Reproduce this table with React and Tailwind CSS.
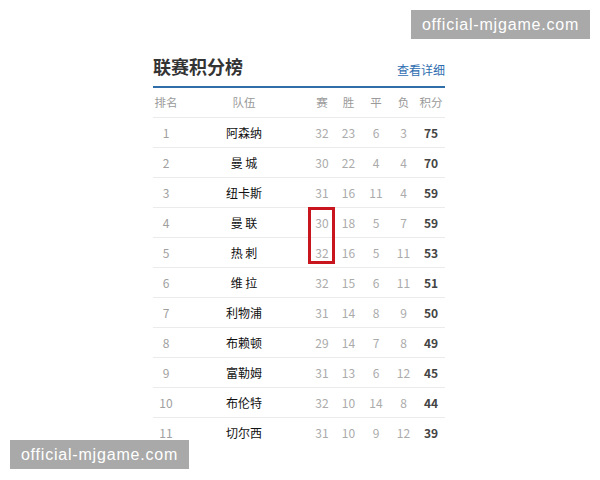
const rows = [
  { rank: 1, team: '阿森纳', p: 32, w: 23, d: 6, l: 3, pts: 75 },
  { rank: 2, team: '曼 城', p: 30, w: 22, d: 4, l: 4, pts: 70 },
  { rank: 3, team: '纽卡斯', p: 31, w: 16, d: 11, l: 4, pts: 59 },
  { rank: 4, team: '曼 联', p: 30, w: 18, d: 5, l: 7, pts: 59 },
  { rank: 5, team: '热 刺', p: 32, w: 16, d: 5, l: 11, pts: 53 },
  { rank: 6, team: '维 拉', p: 32, w: 15, d: 6, l: 11, pts: 51 },
  { rank: 7, team: '利物浦', p: 31, w: 14, d: 8, l: 9, pts: 50 },
  { rank: 8, team: '布赖顿', p: 29, w: 14, d: 7, l: 8, pts: 49 },
  { rank: 9, team: '富勒姆', p: 31, w: 13, d: 6, l: 12, pts: 45 },
  { rank: 10, team: '布伦特', p: 32, w: 10, d: 14, l: 8, pts: 44 },
  { rank: 11, team: '切尔西', p: 31, w: 10, d: 9, l: 12, pts: 39 },
];

const cols = 'grid grid-cols-[26px_130px_26px_27px_28px_27px_28px] items-center text-center';

export default function App() {
  return (
    <div className="relative w-[600px] h-[480px] overflow-hidden bg-white font-['Noto_Sans_CJK_SC','Noto_Sans',sans-serif]">
      <div className="h-[442px] overflow-hidden pt-[54px]">
        <div className="relative ml-[153px] w-[292px]">
          {/* title */}
          <div className="flex h-[34px] items-center justify-between border-b-2 border-[#2f6ea8]">
            <h2 className="-mt-[8px] text-[18px] font-bold leading-none text-[#333]">联赛积分榜</h2>
            <a className="-mt-[1px] text-[12px] leading-none text-[#2e6db0]">查看详细</a>
          </div>

          {/* header */}
          <div className={`${cols} h-[30px] border-b border-[#ebebeb] text-[11.5px] text-[#9a9a9a]`}>
            <span>排名</span>
            <span>队伍</span>
            <span>赛</span>
            <span>胜</span>
            <span>平</span>
            <span>负</span>
            <span>积分</span>
          </div>

          {rows.map((r) => (
            <div key={r.rank} className={`${cols} h-[30px] border-b border-[#ebebeb] text-[12px]`}>
              <span className="text-[#a0a0a0]">{r.rank}</span>
              <span className="whitespace-pre text-[#111]">{r.team}</span>
              <span className="text-[#ababab]">{r.p}</span>
              <span className="text-[#ababab]">{r.w}</span>
              <span className="text-[#ababab]">{r.d}</span>
              <span className="text-[#ababab]">{r.l}</span>
              <span className="font-bold text-[#444]">{r.pts}</span>
            </div>
          ))}

          {/* highlight box */}
          <div className="absolute left-[155px] top-[153px] h-[57px] w-[27px] border-[3px] border-[#c9151e]" />
        </div>
      </div>

      <div className="absolute left-[411px] top-[10px] flex h-[29px] w-[179px] items-center justify-center bg-[#a9a9a9] font-['Liberation_Sans',sans-serif] text-[16px] tracking-[0.8px] text-white">
        official-mjgame.com
      </div>
      <div className="absolute left-[10px] top-[440px] flex h-[29px] w-[179px] items-center justify-center bg-[#a9a9a9] font-['Liberation_Sans',sans-serif] text-[16px] tracking-[0.8px] text-white">
        official-mjgame.com
      </div>
    </div>
  );
}
